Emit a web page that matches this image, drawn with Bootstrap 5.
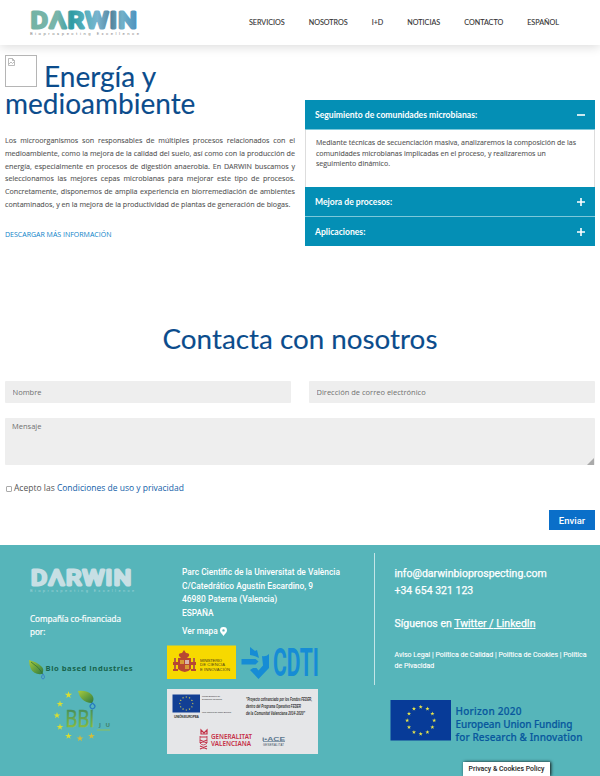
<!DOCTYPE html>
<html lang="es">
<head>
<meta charset="utf-8">
<meta name="viewport" content="width=device-width, initial-scale=1">
<title>Energía y medioambiente - DARWIN</title>
<link href="https://cdn.jsdelivr.net/npm/bootstrap@5.3.0/dist/css/bootstrap.min.css" rel="stylesheet">
<style>
body{font-family:"Open Sans","Noto Sans",sans-serif;color:#555;font-size:7.5px;height:776px;overflow:hidden;background:#fff}
svg{display:block;flex:none;overflow:visible}
.topbar{height:45px;box-shadow:0 2px 10px rgba(0,0,0,.14);padding:0 41px 0 29px}
.topbar .nav-link{font:400 7.2px Lato,sans-serif;color:#333;-webkit-text-stroke:.1px #333;padding:0;white-space:nowrap}
.menu{gap:24px}
.intro{padding:10px 5px 0;height:276px}
.intro-col{width:290px}
.missing{width:32px;height:32px;border:1px solid #b5b5b5;padding:2px;display:inline-block;vertical-align:baseline;margin-right:7px}
.heading{font-family:Lato,"Open Sans",sans-serif;color:#0b4c8c;font-weight:400;margin:0;-webkit-text-stroke:.12px #0b4c8c}
.heading-intro{font-size:28px;line-height:27px}
.copy{font-size:7.15px;line-height:12.75px;text-align:justify;margin:17px 0 0;-webkit-text-stroke:.1px #555}
.more{color:#0a82c8;font-size:7px;margin-top:18px;line-height:12px;text-decoration:none;display:block}
.panels{margin-top:45px}
.panel-head{background:#048fb5;color:#fff;height:29px;padding:0 10px;font:700 8.6px Lato,sans-serif;border-bottom:1px solid #7cc8da;box-sizing:content-box}
.panel-head.last{border:0}
.panel-text{height:57px;border:1px solid #ddd;border-width:0 1px;padding:8px 10px;font-size:7px;line-height:10.6px;white-space:nowrap;-webkit-text-stroke:.1px #555}
.contact{padding:0 5px;height:224px}
.heading-contact{font-size:27.8px;line-height:36px;text-align:center;height:60px}
.contact .form-control{background:#eee;border:0;border-radius:1px;font-size:7.5px;padding:0 7.5px;height:22px;min-height:0;color:#666}
.contact .form-control::placeholder{color:#707070;opacity:1}
.contact textarea.form-control{height:47px;padding:3px 7px;margin-top:15px;resize:none}
.fields{gap:18px}
.msg{position:relative}
.grip{position:absolute;right:1px;bottom:0}
.accept{height:14px;margin-top:16px;font-size:8.5px;gap:2px}
.accept input{appearance:none;width:6px;height:6px;border:1px solid #aaa;border-radius:1px;margin:1px 0 0 1px}
.accept a{color:#1260a8;text-decoration:none}
.send{background:#0a6fc9;color:#fff;border:0;border-radius:0;width:46px;height:20px;padding:0;font:500 9.5px Roboto,sans-serif;margin-top:15px}
.foot{background:#56b5ba;height:231px;color:#fff;font-family:Roboto,sans-serif}
.foot a{color:#fff}
.foot-a{width:167px;padding:21px 0 0 29px}
.foot-b{width:207px;padding-top:21px}
.foot-c{width:226px}
.foot-info{height:132px;margin-top:8px;border-left:1px solid #c4e5e7;padding:12px 0 0 19.5px}
.cofund{font:400 8.1px/13px "Open Sans",sans-serif;margin:16px 0 0 1px;-webkit-text-stroke:.2px #fff}
.address{font-size:8.4px;line-height:13.7px;padding-left:15px;font-weight:500;white-space:nowrap}
.map-link{gap:2px;margin-top:4px}
.reach{font-size:10.5px;line-height:17px;font-weight:400;-webkit-text-stroke:.25px #fff;white-space:nowrap}
.follow{margin-top:16px}
.legal{font-size:7px;line-height:10.6px;margin-top:18px;-webkit-text-stroke:.1px #fff;white-space:nowrap}
.logos{margin-top:5px}
.horizon{margin:14px 0 0 16px}
.policy{position:absolute;left:463px;top:762px;width:87px;height:14px;background:#fff;color:#222;font:500 6.9px/14px Roboto,sans-serif;text-align:center;box-shadow:1px 0 3px #111;white-space:nowrap}
</style>
<script src="https://cdn.jsdelivr.net/npm/bootstrap@5.3.0/dist/js/bootstrap.bundle.min.js"></script>
</head>
<body>
<svg width="0" height="0" class="position-absolute">
<defs>
<linearGradient id="brand"><stop offset="0" stop-color="#74b3a5"/><stop offset=".25" stop-color="#79b5aa"/><stop offset=".38" stop-color="#2f9ba3"/><stop offset=".5" stop-color="#55b0bd"/><stop offset=".62" stop-color="#79b4cf"/><stop offset=".75" stop-color="#55859f"/><stop offset=".85" stop-color="#72b0c8"/><stop offset="1" stop-color="#4a8fbd"/></linearGradient>
<linearGradient id="leaf" x2="1" y2="1"><stop stop-color="#a9cb3c"/><stop offset="1" stop-color="#2c7a3f"/></linearGradient>
<linearGradient id="bbi" x2="0" y2="1"><stop stop-color="#287b65"/><stop offset="1" stop-color="#a5cb32"/></linearGradient>
<path id="star" d="M0-1 .225-.309.951-.309.363.118.588.809 0 .382-.588.809-.363.118-.951-.309-.225-.309Z"/>
<g id="ring"><use href="#star" transform="translate(0 -13.5) scale(2.2)"/><use href="#star" transform="translate(6.75 -11.7) scale(2.2)"/><use href="#star" transform="translate(11.7 -6.75) scale(2.2)"/><use href="#star" transform="translate(13.5 0) scale(2.2)"/><use href="#star" transform="translate(11.7 6.75) scale(2.2)"/><use href="#star" transform="translate(6.75 11.7) scale(2.2)"/><use href="#star" transform="translate(0 13.5) scale(2.2)"/><use href="#star" transform="translate(-6.75 11.7) scale(2.2)"/><use href="#star" transform="translate(-11.7 6.75) scale(2.2)"/><use href="#star" transform="translate(-13.5 0) scale(2.2)"/><use href="#star" transform="translate(-11.7 -6.75) scale(2.2)"/><use href="#star" transform="translate(-6.75 -11.7) scale(2.2)"/></g>
</defs>
</svg>

<nav class="topbar d-flex align-items-center justify-content-between">
<svg width="112" height="30" viewBox="0 0 112 30" aria-label="DARWIN Bioprospecting Excellence">
<text x="1.8" y="19.500" textLength="107.5" lengthAdjust="spacingAndGlyphs" font-family="Roboto" font-weight="400" font-size="22" letter-spacing="1.3" fill="url(#brand)" stroke="url(#brand)" stroke-width="3" stroke-linejoin="round">DΛRWIN</text>
<text x="1" y="27" textLength="109" font-family="Roboto" font-size="4.2" fill="#888">Bioprospecting Excellence</text>
</svg>
<div class="menu d-flex">
<a class="nav-link" href="#">SERVICIOS</a><a class="nav-link" href="#">NOSOTROS</a><a class="nav-link" href="#">I+D</a><a class="nav-link" href="#">NOTICIAS</a><a class="nav-link" href="#">CONTACTO</a><a class="nav-link" href="#">ESPAÑOL</a>
</div>
</nav>

<section class="intro d-flex justify-content-between">
<div class="intro-col">
<h1 class="heading heading-intro"><span class="missing"><svg width="7" height="8" viewBox="0 0 7 8" fill="none" stroke="#aaa" stroke-width=".8"><path d="M.5.5h4l2 2v5h-6zM4.5.5v2h2M1 6l2-2 1.5 1.5L6 4"/></svg></span>Energía y<br>medioambiente</h1>
<p class="copy">Los microorganismos son responsables de múltiples procesos relacionados con el medioambiente, como la mejora de la calidad del suelo, así como con la producción de energía, especialmente en procesos de digestión anaerobia. En DARWIN buscamos y seleccionamos las mejores cepas microbianas para mejorar este tipo de procesos. Concretamente, disponemos de amplia experiencia en biorremediación de ambientes contaminados, y en la mejora de la productividad de plantas de generación de biogas.</p>
<a class="more" href="#">DESCARGAR MÁS INFORMACIÓN</a>
</div>
<div class="intro-col panels">
<div class="panel-head d-flex align-items-center justify-content-between"><span>Seguimiento de comunidades microbianas:</span><svg width="8" height="8" stroke="#fff" stroke-width="1.6"><path d="M0 4h8"/></svg></div>
<div class="panel-text">Mediante técnicas de secuenciación masiva, analizaremos la composición de las<br>comunidades microbianas implicadas en el proceso, y realizaremos un<br>seguimiento dinámico.</div>
<div class="panel-head d-flex align-items-center justify-content-between"><span>Mejora de procesos:</span><svg width="8" height="8" stroke="#fff" stroke-width="1.6"><path d="M0 4h8M4 0v8"/></svg></div>
<div class="panel-head last d-flex align-items-center justify-content-between"><span>Aplicaciones:</span><svg width="8" height="8" stroke="#fff" stroke-width="1.6"><path d="M0 4h8M4 0v8"/></svg></div>
</div>
</section>

<section class="contact">
<h2 class="heading heading-contact">Contacta con nosotros</h2>
<form>
<div class="fields d-flex"><input class="form-control" placeholder="Nombre"><input class="form-control" placeholder="Dirección de correo electrónico"></div>
<div class="msg"><textarea class="form-control" placeholder="Mensaje"></textarea><svg class="grip" width="7" height="7"><path d="M7 0v7H0z" fill="#aaa"/></svg></div>
<label class="accept d-flex align-items-center"><input type="checkbox"><span>Acepto las <a href="#">Condiciones de uso y privacidad</a></span></label>
<div class="d-flex justify-content-end"><button type="button" class="btn send">Enviar</button></div>
</form>
</section>

<footer class="foot d-flex">
<div class="foot-a">
<svg width="107" height="30" viewBox="0 0 112 31" aria-label="DARWIN Bioprospecting Excellence">
<text x="2" y="20" textLength="106.500" lengthAdjust="spacingAndGlyphs" font-family="Roboto" font-weight="400" font-size="22" letter-spacing="1.3" fill="#c7dfe4" stroke="#c7dfe4" stroke-width="3" stroke-linejoin="round">DΛRWIN</text>
<text x="1" y="27.500" textLength="109" font-family="Roboto" font-size="4.200" fill="#9ed2d7">Bioprospecting Excellence</text>
</svg>
<div class="cofund">Compañía co-financiada<br>por:</div>
<svg class="mt-3" width="106" height="96" viewBox="29 655 106 96">
<path d="M29 661q8 2 12 6 4 3 1 8-8 1-11-5-2-4-2-9z" fill="url(#leaf)"/><path d="M31 663q8 5 12 12" stroke="#286b3b" fill="none" stroke-width=".7"/><path d="M43 675q-3 4 0 5 3-1 0-5z" fill="none" stroke="#3a82c6"/>
<text x="45.500" y="671.500" textLength="87" font-family="Open Sans" font-size="7.600" font-weight="700" fill="#17644c">Bio based Industries</text>
<g fill="#d8de32"><use href="#star" transform="translate(68.500 696) scale(3.800)"/><use href="#star" transform="translate(60 705) scale(3.500)"/><use href="#star" transform="translate(57 716.500) scale(3.500)"/><use href="#star" transform="translate(60 728) scale(3.500)"/><use href="#star" transform="translate(68.500 737) scale(3.500)"/><use href="#star" transform="translate(80 739.500) scale(3.500)" fill="#d3bd3a"/><use href="#star" transform="translate(91.500 737) scale(3.500)" fill="#d3bd3a"/></g>
<path d="M78 692q9-1 14 4 3 4 0 8-6 0-10-4-3-3-4-8z" fill="url(#leaf)"/><path d="M92.500 704q-5 4 0 6 5-2 0-6z" fill="none" stroke="#267cc0" stroke-width="1.300"/>
<text x="65.500" y="728" textLength="29" lengthAdjust="spacingAndGlyphs" font-family="Open Sans" font-size="23" fill="url(#bbi)" stroke="url(#bbi)" stroke-width=".5">BBI</text>
<text x="99" y="728" textLength="11" font-family="Open Sans" font-size="6" font-weight="700" fill="#41836c">JU</text><path d="M97 731h13" stroke="#9fc342" stroke-width=".8"/>
</svg>
</div>
<div class="foot-b">
<div class="address">Parc Cientific de la Universitat de València<br>C/Catedrático Agustín Escardino, 9<br>46980 Paterna (Valencia)<br>ESPAÑA
<div class="map-link d-flex align-items-center">Ver mapa <svg width="7" height="9" viewBox="0 0 7 9"><path fill-rule="evenodd" d="M3.500 0A3.400 3.400 0 0 0 0 3.400C0 5.500 2.200 6.500 3.500 9 4.800 6.500 7 5.500 7 3.400A3.400 3.400 0 0 0 3.500 0zm0 2.200a1.200 1.200 0 1 1 0 2.400 1.200 1.200 0 0 1 0-2.400z" fill="#fff"/></svg></div></div>
<svg class="logos" width="160" height="111" viewBox="167 644 160 111">
<path d="M167 645.500h69v33.500h-69z" fill="#f7d900"/>
<g fill="#b84832"><path d="M179 656q-1-3 3-3l2-3 2 3q4 0 3 3l-2 2h-6zM178 658h13v11q-6 6-13 0z"/><path d="M174 658h2v12h-2zM193 658h2v12h-2z" fill="#b25e46"/><path d="M173 662h5v3h-5zM191 662h5v3h-5zM173 669h5v2h-5zM191 669h5v2h-5z"/></g><path d="M180 660h4v4h-4zM185 665h4v4h-4z" fill="#d99b34"/><path d="M185 660h4v4h-4z" fill="#d9b3aa"/>
<g font-family="Liberation Sans" font-size="4.100" fill="#4c421b"><text x="200" y="661.500" textLength="22">MINISTERIO</text><text x="200" y="666.200" textLength="25">DE CIENCIA</text><text x="200" y="671" textLength="30">E INNOVACIÓN</text></g>
<g fill="#168cd5"><path d="M241.500 659h14l3 2.500-3 3h-14zM250 647l5 4 2-1 2 8q-6-3-9-3zM262 656q4 1 7-2v14l-10.500 11-8.500-9 3-2h3.500l2 2.500 4.500-5z"/></g>
<text x="273" y="676" textLength="46" lengthAdjust="spacingAndGlyphs" font-family="Roboto" font-size="39.5" font-weight="700" fill="#168cd5">CDTI</text>
<path d="M167 689h151v65H167z" fill="#e5e6e8"/>
<path d="M172.500 694.500H200v18h-27.500z" fill="#123f94"/><use href="#ring" transform="translate(186.300 703.500) scale(.48)" fill="#e6d94c"/>
<g font-family="Liberation Sans" fill="#333"><text x="174" y="717.500" font-size="3.300" font-weight="700" textLength="25">UNIÓN EUROPEA</text><text x="202" y="697" font-size="2.400" textLength="18">Fondo Europeo de</text><text x="202" y="700" font-size="2.400" textLength="20">Desarrollo Regional</text><text x="202" y="713" font-size="2.400" textLength="29">Una manera de hacer Europa</text></g>
<g font-family="Liberation Sans Narrow, Liberation Sans" font-size="5" font-weight="700" font-style="italic" fill="#333"><text x="246" y="701" textLength="66" lengthAdjust="spacingAndGlyphs">"Proyecto cofinanciado por los Fondos FEDER,</text><text x="246" y="708" textLength="55" lengthAdjust="spacingAndGlyphs">dentro del Programa Operativo FEDER</text><text x="246" y="715" textLength="59" lengthAdjust="spacingAndGlyphs">de la Comunitat Valenciana 2014-2020"</text></g>
<g stroke="#c32f46" fill="none"><path d="M201 730l3 3 3-3v4h-6zM200 737h7M200 740l7 3m-7 0 7-3M200 746l7 3m-7 0 7-3" stroke-width="1.200"/><path d="M200 736v7q3 4 7 0v-7" stroke-width=".8"/></g>
<g font-family="Noto Sans" font-size="6.200" font-weight="600" fill="#c53047"><text x="211" y="738.500" textLength="41" lengthAdjust="spacingAndGlyphs">GENERALITAT</text><text x="211" y="745.500" textLength="40" lengthAdjust="spacingAndGlyphs">VALENCIANA</text></g>
<text x="262" y="740.500" textLength="23" lengthAdjust="spacingAndGlyphs" font-family="Liberation Sans" font-size="6" font-weight="700" fill="#5d7890">i•ACE</text><path d="M263 741.500h22" stroke="#5d7890" stroke-width=".7"/><text x="263" y="745.500" textLength="21" font-family="Liberation Sans" font-size="2.700" fill="#345">GENERALITAT</text>
</svg>
</div>
<div class="foot-c">
<div class="foot-info"><div class="reach">info@darwinbioprospecting.com<br>+34 654 321 123</div><div class="reach follow">Síguenos en <a href="#">Twitter /</a><a href="#"> LinkedIn</a></div>
<div class="legal">Aviso Legal | Política de Calidad | Política de Cookies | Política<br>de Pivacidad</div></div>
<svg class="horizon" width="200" height="44" viewBox="390 699 200 44"><path d="M390.500 700H451v40.500h-60.500z" fill="#073b98"/><use href="#ring" transform="translate(420.700 720.500)" fill="#e9e64a"/>
<g font-family="Noto Sans" font-size="10" font-weight="500" fill="#08589e" stroke="#08589e" stroke-width=".2"><text x="455.500" y="715" textLength="66">Horizon 2020</text><text x="455.500" y="728" textLength="117">European Union Funding</text><text x="455.500" y="740.500" textLength="127">for Research &amp; Innovation</text></g></svg>
</div>
</footer>
<div class="policy">Privacy &amp; Cookies Policy</div>
</body>
</html>
